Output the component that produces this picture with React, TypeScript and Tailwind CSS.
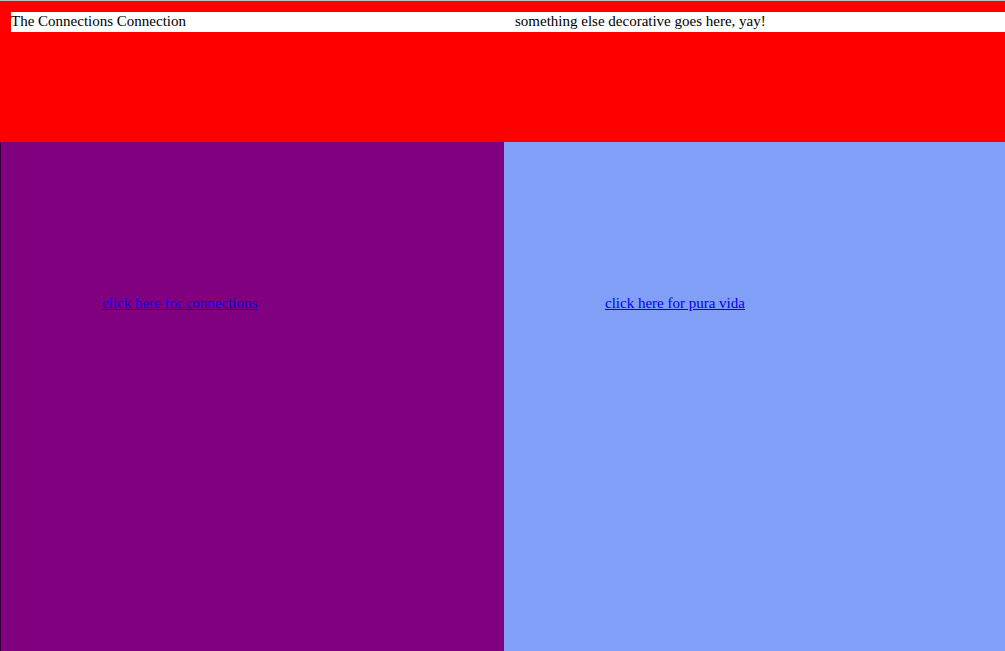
export default function App() {
  const serif = { fontFamily: '"Liberation Serif", "Times New Roman", serif' };
  return (
    <div className="w-[1005px] h-[651px] overflow-hidden bg-white text-[15px]" style={serif}>
      <div className="h-px bg-[#c0c0c0]" />
      <div className="h-[141px] bg-[#ff0000] pt-[11px]">
        <div className="ml-[11px] h-[20px] bg-white flex leading-[19px] text-black">
          <div className="w-[493px]">The Connections Connection</div>
          <div className="pl-[11px]">something else decorative goes here, yay!</div>
        </div>
      </div>
      <div className="flex h-[509px]">
        <div className="w-[504px] bg-[#800080] border-l border-[#3a003a] pt-[150px] pl-[101px]">
          <a href="#" className="text-[#0000ee] underline leading-[18px]">click here for connections</a>
        </div>
        <div className="flex-1 bg-[#819ff7] pt-[150px] pl-[101px]">
          <a href="#" className="text-[#0000ee] underline leading-[18px]">click here for pura vida</a>
        </div>
      </div>
    </div>
  );
}
